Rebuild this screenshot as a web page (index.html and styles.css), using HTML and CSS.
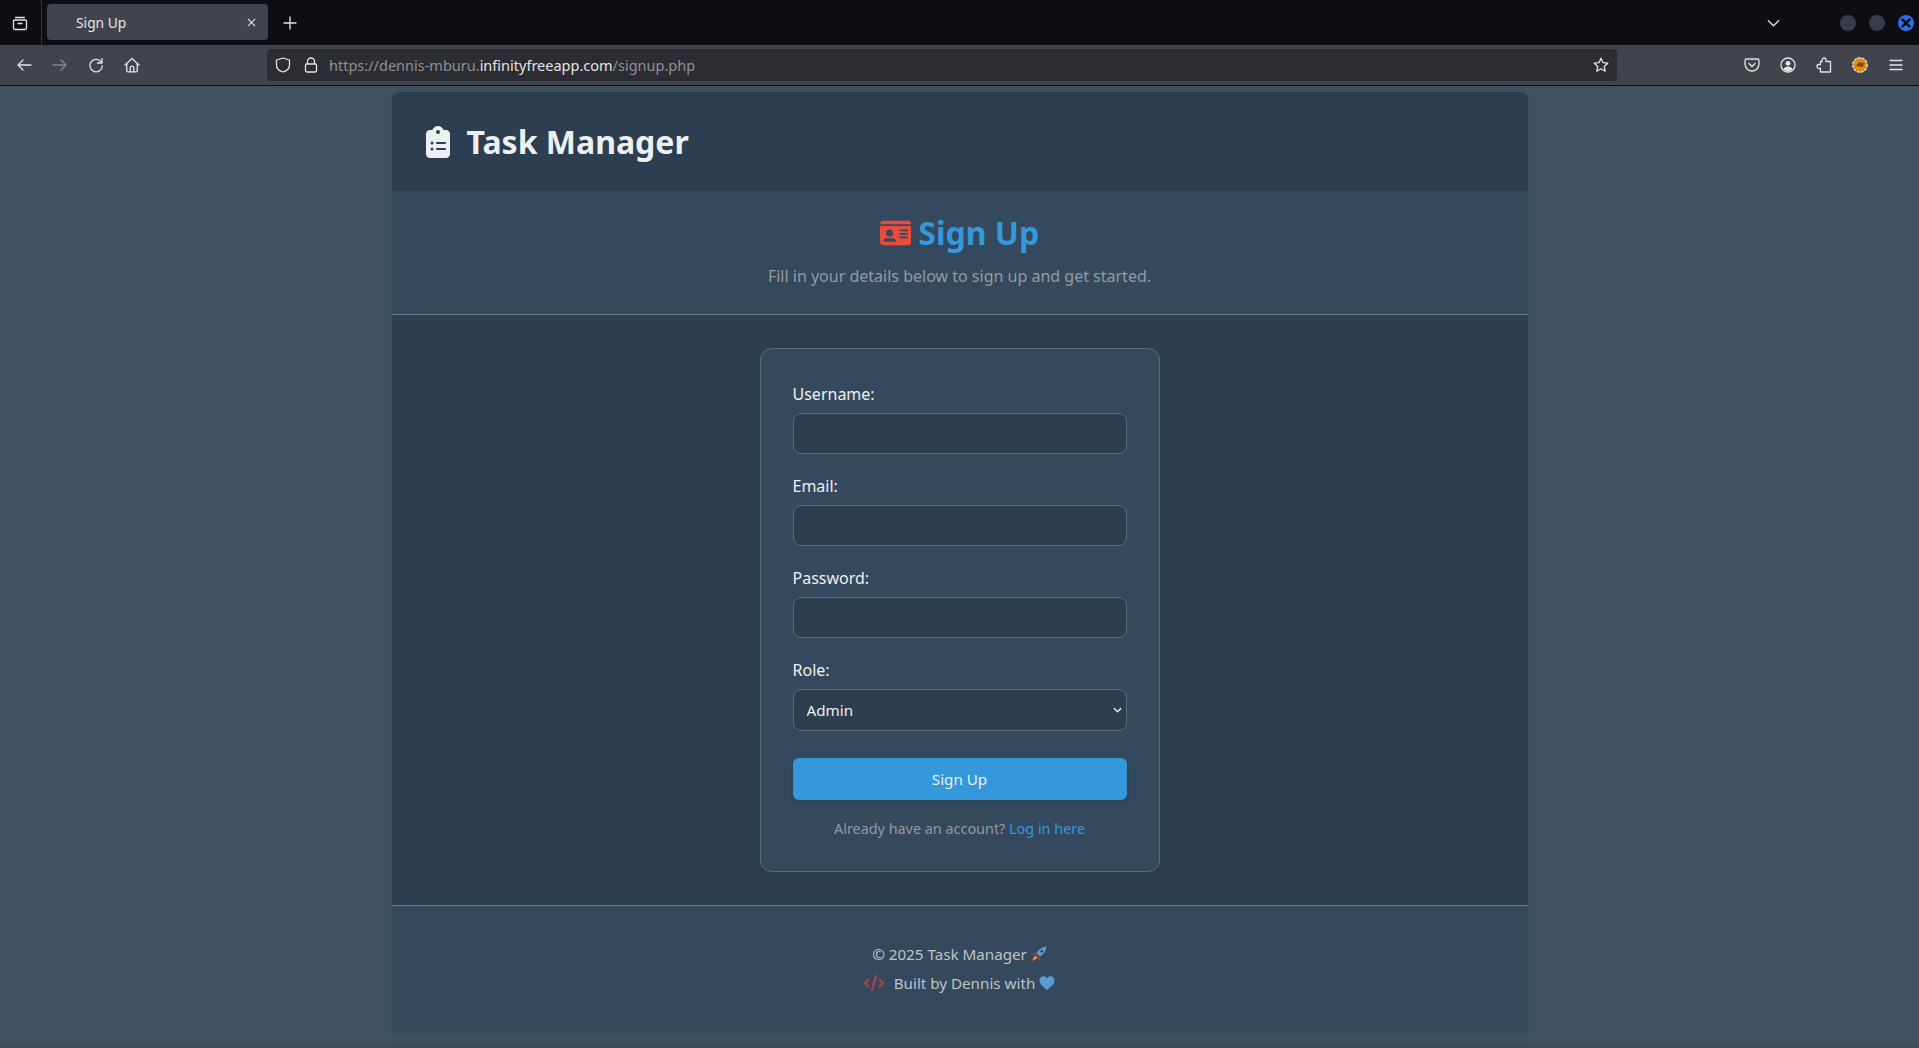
FILE: index.html
```html
<!DOCTYPE html>
<html>
  <head>
    <meta charset="UTF-8" />
    <title>Sign Up</title>
    <link rel="stylesheet" href="styles.css">
  </head>

  <body>
    <!-- browser chrome -->
    <div class="tabstrip">
      <div class="tabstrip-left">
        <svg class="ico" viewBox="0 0 16 16"><path d="M3.5 2.5h9M2.5 5h11a1 1 0 0 1 1 1v7a1.5 1.5 0 0 1-1.5 1.5H3A1.5 1.5 0 0 1 1.500 13V6a1 1 0 0 1 1-1zM6 8.500h4"/></svg>
      </div>
      <div class="tab">
        <span class="tab-title">Sign Up</span>
        <svg class="tab-close" viewBox="0 0 10 10"><path d="M1 1l8 8M9 1l-8 8"/></svg>
      </div>
      <svg class="ico newtab" viewBox="0 0 16 16"><path d="M8 2v12M2 8h12"/></svg>
      <div class="tabstrip-right">
        <svg class="tabs-down" viewBox="0 0 14 8"><path d="M1 1l6 6 6-6"/></svg>
        <span class="winbtn"></span>
        <span class="winbtn"></span>
        <span class="winbtn close">
          <svg viewBox="0 0 10 10"><path d="M2 2l6 6M8 2l-6 6"/></svg>
        </span>
      </div>
    </div>
    <div class="toolbar">
      <div class="nav">
        <svg class="ico" viewBox="0 0 16 16"><path d="M15 8H2M7 3L2 8l5 5"/></svg>
        <svg class="ico dim" viewBox="0 0 16 16"><path d="M1 8h13M9 3l5 5-5 5"/></svg>
        <svg class="ico" viewBox="0 0 16 16"><path d="M13.500 5.500A6.200 6.200 0 1 0 14.300 9M14 1.500V6H9.500"/></svg>
        <svg class="ico" viewBox="0 0 16 16"><path d="M1 8l7-6.500L15 8M2.800 6.500V14a.8.8 0 0 0 .8.8h8.800a.8.8 0 0 0 .8-.8V6.500M6.200 14.800V11a1.800 1.800 0 0 1 3.600 0v3.800"/></svg>
      </div>
      <div class="urlbar">
        <svg class="ico" viewBox="0 0 16 16"><path d="M8 1l6.500 2v5c0 3.500-3 6-6.500 7-3.500-1-6.500-3.500-6.500-7V3z"/></svg>
        <svg class="ico lock" viewBox="0 0 16 16"><path d="M4.500 7V4.500a3.500 3.500 0 0 1 7 0V7M3.500 7h9a1 1 0 0 1 1 1v5.500a1.500 1.500 0 0 1-1.500 1.500H4a1.500 1.500 0 0 1-1.500-1.500V8a1 1 0 0 1 1-1z"/></svg>
        <span class="url">https://dennis-mburu.<b>infinityfreeapp.com</b>/signup.php</span>
        <svg class="ico star" viewBox="0 0 16 16"><path d="M8 1.200l2 4.500 4.800.5-3.600 3.200 1 4.800L8 11.800l-4.200 2.400 1-4.800L1.200 6.200 6 5.700z"/></svg>
      </div>
      <div class="addons">
        <svg class="ico" viewBox="0 0 16 16"><path d="M2.500 2h11A1.500 1.500 0 0 1 15 3.500V7a7 7 0 0 1-14 0V3.500A1.500 1.500 0 0 1 2.500 2zM5 6.500l3 3 3-3"/></svg>
        <svg class="ico" viewBox="0 0 16 16"><circle cx="8" cy="8" r="7"/><circle cx="8" cy="6.300" r="2.400" class="fill"/><path class="fill" d="M3.500 12.500c.5-2 2.300-3 4.500-3s4 1 4.500 3A6.500 6.500 0 0 1 8 14.300a6.500 6.500 0 0 1-4.500-1.800z"/></svg>
        <svg class="ico" viewBox="0 0 16 16"><path d="M6 4.500V3a2 2 0 0 1 4 0v1.500h4.500V15H4.500v-3.500H3a2 2 0 0 1 0-4h1.500v-3z"/></svg>
        <svg class="ico" viewBox="0 0 16 16"><circle cx="8" cy="8" r="7.200" fill="#e08a14" stroke="#e8e8e8" stroke-dasharray="2 2"/><path d="M4 9l3-4 5 1-1 4z" fill="#7a4a10" stroke="none"/></svg>
        <svg class="ico" viewBox="0 0 16 16"><path d="M2 3.500h12M2 8h12M2 12.500h12"/></svg>
      </div>
    </div>

    <!-- page -->
    <div class="page">
      <div class="container">
        <header class="site-header">
          <svg class="fa" viewBox="0 0 384 512"><path d="M192 0c-41.800 0-77.400 26.700-90.500 64H64C28.700 64 0 92.700 0 128V448c0 35.300 28.700 64 64 64H320c35.300 0 64-28.700 64-64V128c0-35.300-28.700-64-64-64H282.500C269.400 26.700 233.800 0 192 0zm0 64a32 32 0 1 1 0 64 32 32 0 1 1 0-64zM72 272a24 24 0 1 1 48 0 24 24 0 1 1 -48 0zm104-16H304c8.800 0 16 7.200 16 16s-7.200 16-16 16H176c-8.800 0-16-7.200-16-16s7.200-16 16-16zM72 368a24 24 0 1 1 48 0 24 24 0 1 1 -48 0zm88 0c0-8.800 7.200-16 16-16H304c8.800 0 16 7.200 16 16s-7.200 16-16 16H176c-8.800 0-16-7.200-16-16z"/></svg>
          <h1>Task Manager</h1>
        </header>

        <section class="intro">
          <h2>
            <svg class="fa" viewBox="0 0 576 512"><path d="M0 96l576 0c0-35.300-28.700-64-64-64H64C28.700 32 0 60.700 0 96zm0 32V416c0 35.300 28.700 64 64 64H512c35.300 0 64-28.700 64-64V128H0zM64 405.300c0-29.500 23.900-53.300 53.300-53.300H234.700c29.500 0 53.300 23.900 53.300 53.300c0 5.900-4.800 10.700-10.700 10.700H74.700c-5.900 0-10.700-4.800-10.700-10.700zM176 192a64 64 0 1 1 0 128 64 64 0 1 1 0-128zm176 16c0-8.800 7.200-16 16-16H496c8.800 0 16 7.200 16 16s-7.200 16-16 16H368c-8.800 0-16-7.200-16-16zm0 64c0-8.800 7.200-16 16-16H496c8.800 0 16 7.200 16 16s-7.200 16-16 16H368c-8.800 0-16-7.200-16-16zm0 64c0-8.800 7.200-16 16-16H496c8.800 0 16 7.200 16 16s-7.200 16-16 16H368c-8.800 0-16-7.200-16-16z"/></svg>
            Sign Up
          </h2>
          <p>Fill in your details below to sign up and get started.</p>
        </section>

        <main class="main">
          <form class="card">
            <div class="field">
              <label for="username">Username:</label>
              <input type="text" id="username" />
            </div>
            <div class="field">
              <label for="email">Email:</label>
              <input type="email" id="email" />
            </div>
            <div class="field">
              <label for="password">Password:</label>
              <input type="password" id="password" />
            </div>
            <div class="field">
              <label for="role">Role:</label>
              <div class="select-wrap">
                <select id="role">
                  <option>Admin</option>
                  <option>User</option>
                </select>
                <svg class="caret" viewBox="0 0 10 6"><path d="M1 1l4 4 4-4"/></svg>
              </div>
            </div>
            <button type="button" class="btn">Sign Up</button>
            <p class="login">Already have an account? <a href="#">Log in here</a></p>
          </form>
        </main>

        <footer class="site-footer">
          <p>
            © 2025 Task Manager
            <svg class="emoji" viewBox="0 0 16 16"><path d="M15.500.500C12 .800 8.500 2.500 5.500 7l3.500 3.500c4.500-3 6.200-6.500 6.500-10z" fill="#5b9bd5"/><path d="M5.500 7l-1.200 1.500 3.200 3.200L9 10.500z" fill="#a8324a"/><circle cx="10.800" cy="5.200" r="1.300" fill="#2c3e50"/><path d="M4 9.500L1 15l5.500-3z" fill="#e8a33d"/><path d="M5.500 7H2.500L1.500 9l3-.5zM9 10.500V13.500L7 14.500l.5-3z" fill="#a8324a"/></svg>
          </p>
          <p>
            <svg class="fa code" viewBox="0 0 640 512"><path d="M392.800 1.200c-17-4.900-34.700 5-39.600 22l-128 448c-4.900 17 5 34.700 22 39.600s34.700-5 39.600-22l128-448c4.900-17-5-34.700-22-39.600zm80.600 120.100c-12.500 12.500-12.500 32.800 0 45.300L562.700 256l-89.400 89.400c-12.500 12.500-12.500 32.800 0 45.300s32.800 12.500 45.300 0l112-112c12.500-12.500 12.500-32.800 0-45.300l-112-112c-12.500-12.500-32.800-12.500-45.300 0zm-306.700 0c-12.500-12.500-32.800-12.500-45.300 0l-112 112c-12.500 12.500-12.500 32.800 0 45.300l112 112c12.500 12.500 32.800 12.500 45.300 0s12.500-32.800 0-45.300L77.300 256l89.400-89.400c12.500-12.500 12.500-32.800 0-45.300z"/></svg>
            Built by Dennis with
            <svg class="emoji" viewBox="0 0 16 16"><path d="M8 15C3.500 11.500.500 9 .500 5.300.500 3 2.300 1.300 4.400 1.300 5.900 1.300 7.200 2.100 8 3.400 8.800 2.100 10.100 1.300 11.600 1.300c2.100 0 3.900 1.700 3.900 4C15.500 9 12.500 11.500 8 15z" fill="#5b9bd5"/></svg>
          </p>
        </footer>
      </div>
    </div>
  </body>
</html>
```

FILE: styles.css
```css
html,
body {
  margin: 0;
  padding: 0;
  height: 100%;
  overflow: hidden;
}

body {
  display: flex;
  flex-direction: column;
  font-family: "Noto Sans", sans-serif;
  background-color: #0d0e13;
}

/* browser chrome */
.ico {
  width: 16px;
  height: 16px;
  fill: none;
  stroke: #e4e4e6;
  stroke-width: 1.3;
  stroke-linecap: round;
  stroke-linejoin: round;
  flex: none;
}

.ico .fill {
  fill: #e4e4e6;
  stroke: none;
}

.ico.dim {
  stroke: #85868b;
}

.tabstrip {
  height: 45px;
  display: flex;
  align-items: center;
  background-color: #0d0e13;
  flex: none;
}

.tabstrip-left {
  width: 42px;
  height: 45px;
  box-sizing: border-box;
  padding-right: 1px;
  display: flex;
  align-items: center;
  justify-content: center;
  border-right: 1px solid #34353a;
}

.tab {
  width: 221px;
  height: 36px;
  margin: 0 0 1px 5px;
  box-sizing: border-box;
  padding: 0 12px 0 29px;
  display: flex;
  align-items: center;
  justify-content: space-between;
  background-color: #42444c;
  border-radius: 4px;
  color: #e4e4e6;
  font-size: 13.800px;
}

.tab-close {
  width: 9px;
  height: 9px;
  fill: none;
  stroke: #e4e4e6;
  stroke-width: 1.2;
}

.newtab {
  margin-left: 14px;
}

.tabstrip-right {
  margin-left: auto;
  display: flex;
  align-items: center;
}

.tabs-down {
  width: 13px;
  height: 8px;
  margin-right: 60px;
  fill: none;
  stroke: #e4e4e6;
  stroke-width: 1.3;
}

.winbtn {
  width: 16px;
  height: 16px;
  margin-right: 13px;
  border-radius: 50%;
  background-color: #373c4b;
}

.winbtn.close {
  margin-right: 5px;
  background-color: #2a6ee8;
  display: flex;
  align-items: center;
  justify-content: center;
}

.winbtn.close svg {
  width: 14px;
  height: 14px;
  fill: none;
  stroke: #0d0e13;
  stroke-width: 1.8;
}

.toolbar {
  height: 40px;
  display: flex;
  align-items: center;
  background-color: #42444c;
  border-bottom: 1px solid #0d0e13;
  flex: none;
}

.nav {
  width: 267px;
  box-sizing: border-box;
  padding-left: 16px;
  display: flex;
  gap: 20px;
}

.urlbar {
  width: 1350px;
  height: 32px;
  box-sizing: border-box;
  padding: 0 8px;
  display: flex;
  align-items: center;
  background-color: #2c2d32;
  border-radius: 4px;
  color: #8f9095;
  font-size: 14.500px;
}

.lock {
  margin-left: 12px;
}

.url {
  margin-left: 10px;
  flex: 1;
}

.url b {
  font-weight: normal;
  color: #e4e4e6;
}

.addons {
  margin-left: 127px;
  display: flex;
  gap: 20px;
}

/* page */
.page {
  flex: 1;
  display: flex;
  justify-content: center;
  padding-top: 6px;
  background: linear-gradient(to top, #3a4a58, #415363 7px);
}

.container {
  width: 1136px;
  height: 940px;
  border-radius: 8px 8px 0 0;
  box-shadow: 0 0 15px rgba(0, 0, 0, 0.1);
  background-color: #2c3e50;
  display: flex;
  flex-direction: column;
}

.site-header {
  height: 99px;
  box-sizing: border-box;
  padding: 0 34px;
  display: flex;
  align-items: center;
  gap: 17px;
  color: #ecf0f1;
}

.site-header .fa {
  width: 24px;
  height: 32px;
  fill: #ecf0f1;
}

h1 {
  margin: 0;
  font-size: 32px;
  font-weight: 700;
}

.intro {
  height: 124px;
  box-sizing: border-box;
  padding-top: 20px;
  background-color: #34495e;
  border-bottom: 1px solid #6b7b8c;
  text-align: center;
}

h2 {
  margin: 0;
  font-size: 32px;
  line-height: 44px;
  font-weight: 700;
  color: #3498db;
  display: flex;
  align-items: center;
  justify-content: center;
  gap: 7px;
}

h2 .fa {
  width: 31.500px;
  height: 28px;
  fill: #e74c3c;
}

.intro p {
  margin: 10px 0 0;
  font-size: 16px;
  color: #95999f;
}

.main {
  flex: 1;
  display: flex;
  justify-content: center;
  padding-top: 33px;
}

.card {
  width: 400px;
  height: 524px;
  box-sizing: border-box;
  padding: 33px 32px 32px;
  background-color: #34495e;
  border: 1px solid #5c6b7b;
  border-radius: 12px;
}

.field {
  margin-bottom: 20px;
}

label {
  display: block;
  margin-bottom: 7px;
  font-size: 16px;
  line-height: 24px;
  font-weight: 450;
  color: #ecf0f1;
}

input,
select {
  display: block;
  width: 100%;
  height: 41px;
  box-sizing: border-box;
  padding: 0 13px;
  font-family: inherit;
  font-size: 15.200px;
  color: #ecf0f1;
  background-color: #2c3e50;
  border: 1px solid #5c6b7b;
  border-radius: 8px;
}

select {
  height: 42px;
  appearance: none;
}

.select-wrap {
  position: relative;
}

.caret {
  position: absolute;
  top: 18px;
  right: 5px;
  width: 9px;
  height: 6px;
  fill: none;
  stroke: #ecf0f1;
  stroke-width: 1.6;
}

.btn {
  display: block;
  width: 100%;
  height: 42px;
  margin-top: 27px;
  font-family: inherit;
  font-size: 15.200px;
  color: #ecf0f1;
  background-color: #3498db;
  border: 0;
  border-radius: 6px;
  box-shadow: 0 2px 5px rgba(0, 0, 0, 0.1);
}

.login {
  margin: 18.500px 0 0;
  text-align: center;
  font-size: 14.400px;
  color: #95999f;
}

.login a {
  color: #3498db;
  text-decoration: none;
}

.site-footer {
  height: 127px;
  box-sizing: border-box;
  padding-top: 37px;
  background-color: #34495e;
  border-top: 1px solid #6b7b8c;
  text-align: center;
  font-size: 15.200px;
  color: #bdc3c7;
}

.site-footer p {
  margin: 0 0 7px;
  line-height: 22px;
}

.fa.code {
  width: 20px;
  height: 16px;
  margin-right: 6px;
  fill: #b5433e;
  vertical-align: -2px;
}

.emoji {
  width: 16px;
  height: 16px;
  vertical-align: -2px;
}
```
